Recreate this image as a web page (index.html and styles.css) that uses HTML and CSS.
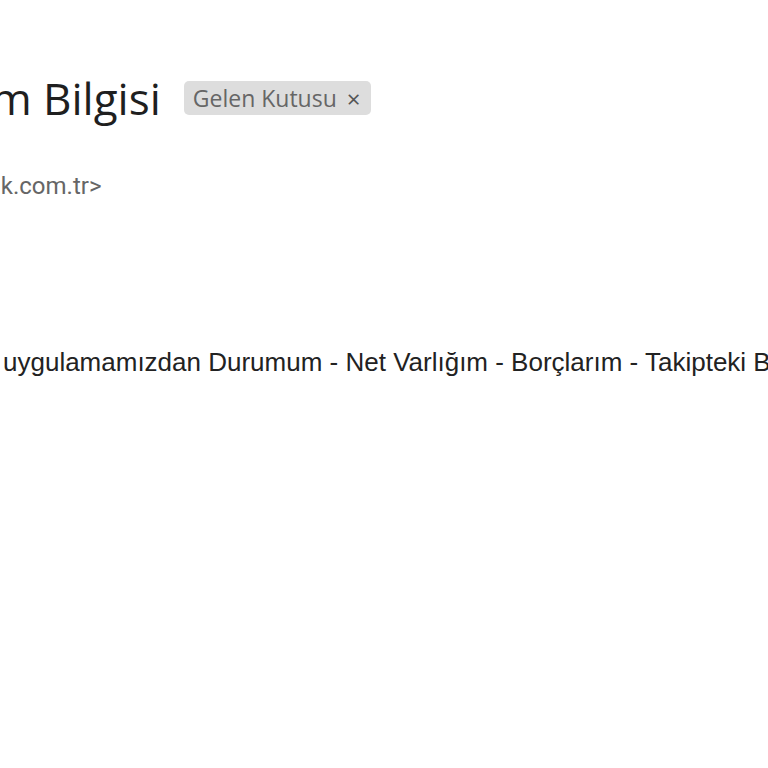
FILE: index.html
```html
<!DOCTYPE html>
<html lang="tr">
<head>
<meta charset="utf-8">
<link rel="stylesheet" href="styles.css">
</head>
<body>
<div class="page">
  <div class="subject-row">
    <h1 class="subject"><span class="cut-title">Durum</span> Bilgisi</h1>
    <span class="label">Gelen Kutusu <span class="label-x">×</span></span>
  </div>
  <div class="sender"><span class="cut-sender">bilgi@bank</span>.com.tr&gt;</div>
  <div class="body-text">uygulamamızdan Durumum - Net Varlığım - Borçlarım - Takipteki Bilgilerim</div>
</div>
</body>
</html>
```
FILE: styles.css
```css
html, body {
  margin: 0;
  padding: 0;
  background: #ffffff;
  width: 768px;
  height: 768px;
  overflow: hidden;
}
.page {
  width: 768px;
  height: 768px;
  overflow: hidden;
  padding-top: 73px;
  box-sizing: border-box;
}
.subject-row {
  display: flex;
  align-items: center;
  gap: 23px;
  white-space: nowrap;
}
.subject {
  margin: 0 0 0 -113px;
  font-family: "Open Sans", Roboto, sans-serif;
  font-weight: 400;
  font-size: 44px;
  line-height: 50px;
  color: #1f1f1f;
}
.label {
  display: inline-flex;
  align-items: center;
  height: 34px;
  padding: 0 10px 0 9px;
  background: #dddddd;
  border-radius: 5px;
  font-family: "Open Sans", Roboto, sans-serif;
  font-size: 23px;
  color: #666666;
}
.label-x {
  margin-left: 10px;
  font-size: 24px;
  color: #555555;
}
.sender {
  margin: 49px 0 0 -105px;
  white-space: nowrap;
  font-family: Roboto, "Open Sans", sans-serif;
  font-size: 24px;
  line-height: 28px;
  color: #666666;
}
.body-text {
  margin: 147px 0 0 3px;
  white-space: nowrap;
  font-family: "Liberation Sans", Arial, sans-serif;
  font-size: 26px;
  line-height: 30px;
  color: #222222;
}
```
